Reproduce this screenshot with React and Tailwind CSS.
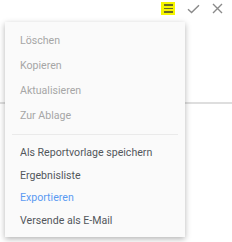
import React from 'react';

const upperItems = ['Löschen', 'Kopieren', 'Aktualisieren', 'Zur Ablage'];

const lowerItems = [
  { label: 'Als Reportvorlage speichern', color: 'text-[#52575c]' },
  { label: 'Ergebnisliste', color: 'text-[#52575c]' },
  { label: 'Exportieren', color: 'text-[#5b9af2]' },
  { label: 'Versende als E-Mail', color: 'text-[#52575c]' }
];

const App = () => {
  return (
    <div
      className="relative w-[232px] h-[242px] bg-white overflow-hidden"
      style={{ fontFamily: 'Roboto, "Liberation Sans", sans-serif' }}
    >
      {/* toolbar */}
      <div className="flex items-center justify-end h-[16px] pr-[9px] gap-[12px]">
        <button className="w-[14px] h-[13px] bg-[#f6f600] flex flex-col items-center justify-center gap-[2px] mt-[1px]">
          <span className="block w-[9px] h-[1.5px] bg-[#6b6b2a]" />
          <span className="block w-[9px] h-[1.5px] bg-[#6b6b2a]" />
          <span className="block w-[9px] h-[1.5px] bg-[#6b6b2a]" />
        </button>
        <svg width="13" height="10" viewBox="0 0 13 10" className="mt-[1px]">
          <path d="M1 5.2 L4.6 8.6 L12 1.2" fill="none" stroke="#8a8a8a" strokeWidth="1.4" />
        </svg>
        <svg width="11" height="11" viewBox="0 0 11 11" className="mt-[1px]">
          <path d="M1 1 L10 10 M10 1 L1 10" fill="none" stroke="#8a8a8a" strokeWidth="1.4" />
        </svg>
      </div>

      {/* page content behind the menu */}
      <div className="mt-[86px] h-[2px] bg-[#dedede]" />

      {/* dropdown */}
      <div className="absolute left-[5px] top-[22px] w-[180px] bg-[#fafafa] pt-[6px] pb-[5px] shadow-[0_2px_6px_rgba(0,0,0,0.3)]">
        {upperItems.map((item) => (
          <div key={item} className="h-[25px] flex items-center pl-[15px] text-[10.6px] text-[#a6a6a6]">
            {item}
          </div>
        ))}
        <div className="mx-[7px] mt-[6px] mb-[7px] h-px bg-[#eaeaea]" />
        {lowerItems.map((item) => (
          <div key={item.label} className={`h-[22.5px] flex items-center pl-[15px] text-[10.6px] ${item.color}`}>
            {item.label}
          </div>
        ))}
      </div>
    </div>
  );
};

export default App;
